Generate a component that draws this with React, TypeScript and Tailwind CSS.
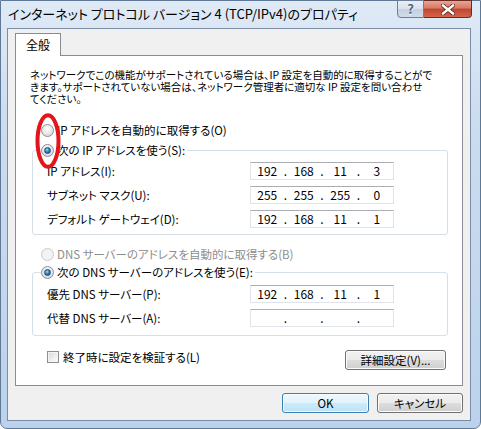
import React from 'react';
import clsx from 'clsx';

function Radio({ checked, disabled }: { checked?: boolean; disabled?: boolean }) {
  return (
    <span
      className={clsx(
        'flex h-[13px] w-[13px] shrink-0 items-center justify-center rounded-full border',
        disabled
          ? 'border-[#cacaca] bg-[#f3f3f3]'
          : 'border-[#8e8f8f] bg-[radial-gradient(circle_at_50%_35%,#ffffff_0%,#e6e6e6_55%,#cfcfcf_100%)]'
      )}
    >
      {checked && (
        <span className="h-[7px] w-[7px] rounded-full border border-[#1d4f86] bg-[radial-gradient(circle_at_40%_35%,#a6e0fb_0%,#2f7fc8_45%,#0c3f7c_100%)]" />
      )}
    </span>
  );
}

function IpBox({ parts }: { parts: string[] }) {
  return (
    <div className="flex h-[18px] w-[144px] items-center border border-[#e2e3ea] border-t-[#abadb3] bg-white text-[12px] leading-[14px] text-black">
      {parts.map((p, i) => (
        <React.Fragment key={i}>
          {i > 0 && <span className="w-[4px] text-center">.</span>}
          <span className="flex-1 text-center">{p}</span>
        </React.Fragment>
      ))}
    </div>
  );
}

function Row({ label, parts }: { label: string; parts: string[] }) {
  return (
    <div className="flex h-[18px] items-center pl-[6px]">
      <span className="w-[203px] shrink-0">{label}</span>
      <IpBox parts={parts} />
    </div>
  );
}

function WinButton({ children, primary, className }: { children: React.ReactNode; primary?: boolean; className?: string }) {
  return (
    <div
      className={clsx(
        'flex h-[20px] items-center justify-center rounded-[3px] border text-[11.5px] leading-[14px] shadow-[inset_0_0_0_1px_#fcfcfc]',
        primary
          ? 'border-[#3c7fb1] bg-[linear-gradient(#eef8fd_0%,#e1f3fc_50%,#cdebfb_50%,#bde2f6_100%)]'
          : 'border-[#707070] bg-[linear-gradient(#f2f2f2_0%,#ebebeb_50%,#dddddd_50%,#cfcfcf_100%)]',
        className
      )}
    >
      {children}
    </div>
  );
}

export default function App() {
  return (
    <div className="relative h-[429px] w-[481px] overflow-hidden bg-white font-['Noto_Sans_CJK_JP',sans-serif] text-[11.5px] leading-[14px] text-black [font-feature-settings:'palt']">
      <div className="flex h-[429px] w-[481px] flex-col rounded-b-[7px] border border-[#5f7896] bg-[linear-gradient(#dfeaf6_0%,#cbdcef_30%,#bcd2ec_100%)]">
        {/* title bar */}
        <div className="flex h-[27px] shrink-0 items-start justify-between">
          <span className="mt-[5px] pl-[7px] text-[13px] leading-[16px] text-black">
            インターネット プロトコル バージョン 4 (TCP/IPv4)のプロパティ
          </span>
          <div className="-mt-px mr-[8px] flex h-[18px]">
            <div className="flex w-[27px] items-center justify-center rounded-bl-[4px] border border-[#6b7f99] bg-[linear-gradient(#e9eff7_0%,#d8e2ee_50%,#c2d0e1_50%,#cfdbe9_100%)] text-[13px] font-bold leading-[14px] text-[#55667e] [text-shadow:0_1px_0_#ffffff]">
              ?
            </div>
            <div className="flex w-[48px] items-center justify-center rounded-br-[4px] border border-l-0 border-[#6a2a22] bg-[linear-gradient(#e8a596_0%,#d47a66_45%,#c2452e_50%,#d2654b_100%)]">
              <svg width="14" height="11" viewBox="0 0 14 11">
                <path d="M2 1.5 L12 9.5 M12 1.5 L2 9.5" stroke="#5a2018" strokeWidth="4" strokeLinecap="square" />
                <path d="M2 1.5 L12 9.5 M12 1.5 L2 9.5" stroke="#ffffff" strokeWidth="2.4" strokeLinecap="square" />
              </svg>
            </div>
          </div>
        </div>

        {/* client area */}
        <div className="ml-[6px] mr-[9px] flex h-[393px] shrink-0 flex-col border border-[#7c8ea5] bg-[#f0f0f0] px-[7px] pt-[4px]">
          <div className="relative z-10 -mb-px flex h-[23px] w-[46px] items-center justify-center border border-b-0 border-[#898c95] bg-white text-[12px]">
            全般
          </div>
          <div className="flex h-[331px] flex-col border border-[#898c95] bg-white pl-[16px] pr-[14px]">
            <p className="-ml-[2px] mt-[13px] whitespace-nowrap text-[10.5px] leading-[12px]">
              ネットワークでこの機能がサポートされている場合は、IP 設定を自動的に取得することがで
              <br />
              きます。サポートされていない場合は、ネットワーク管理者に適切な IP 設定を問い合わせ
              <br />
              てください。
            </p>

            <div className="mt-[18px] flex h-[14px] items-center gap-[3px] pl-[9px]">
              <Radio />
              <span>IP アドレスを自動的に取得する(O)</span>
            </div>

            <fieldset className="mt-[6px] rounded-[3px] border border-[#d5dfe5] px-[8px] pb-[6px]">
              <legend className="flex h-[14px] items-center gap-[3px] pr-[2px]">
                <Radio checked />
                <span>次の IP アドレスを使う(S):</span>
              </legend>
              <div className="mt-[5px] flex flex-col gap-[6px]">
                <Row label="IP アドレス(I):" parts={['192', '168', '11', '3']} />
                <Row label="サブネット マスク(U):" parts={['255', '255', '255', '0']} />
                <Row label="デフォルト ゲートウェイ(D):" parts={['192', '168', '11', '1']} />
              </div>
            </fieldset>

            <div className="mt-[12px] flex h-[14px] items-center gap-[3px] pl-[9px] text-[#8d8d8d]">
              <Radio disabled />
              <span>DNS サーバーのアドレスを自動的に取得する(B)</span>
            </div>

            <fieldset className="mt-[4px] rounded-[3px] border border-[#d5dfe5] px-[8px] pb-[8px]">
              <legend className="flex h-[14px] items-center gap-[3px] pr-[2px]">
                <Radio checked />
                <span>次の DNS サーバーのアドレスを使う(E):</span>
              </legend>
              <div className="mt-[6px] flex flex-col gap-[6px]">
                <Row label="優先 DNS サーバー(P):" parts={['192', '168', '11', '1']} />
                <Row label="代替 DNS サーバー(A):" parts={['', '', '', '']} />
              </div>
            </fieldset>

            <div className="mt-[14px] flex items-start justify-between">
              <div className="flex h-[14px] items-center gap-[4px] pl-[15px]">
                <span className="h-[12px] w-[12px] border border-[#8e8f8f] bg-[linear-gradient(135deg,#d6d6d6_0%,#f4f4f4_70%,#ffffff_100%)] shadow-[inset_0_0_0_1px_#f4f4f4]" />
                <span>終了時に設定を検証する(L)</span>
              </div>
              <WinButton className="mr-[2px] w-[101px]">詳細設定(V)...</WinButton>
            </div>
          </div>

          <div className="mt-[7px] flex justify-end gap-[8px]">
            <WinButton primary className="w-[87px]">OK</WinButton>
            <WinButton className="w-[86px]">キャンセル</WinButton>
          </div>
        </div>
      </div>

      {/* red annotation ellipse */}
      <svg className="absolute left-[35px] top-[113px]" width="26" height="56" viewBox="0 0 26 56">
        <ellipse cx="13" cy="28" rx="10.5" ry="25.8" fill="none" stroke="#e3141b" strokeWidth="4" />
      </svg>
    </div>
  );
}
